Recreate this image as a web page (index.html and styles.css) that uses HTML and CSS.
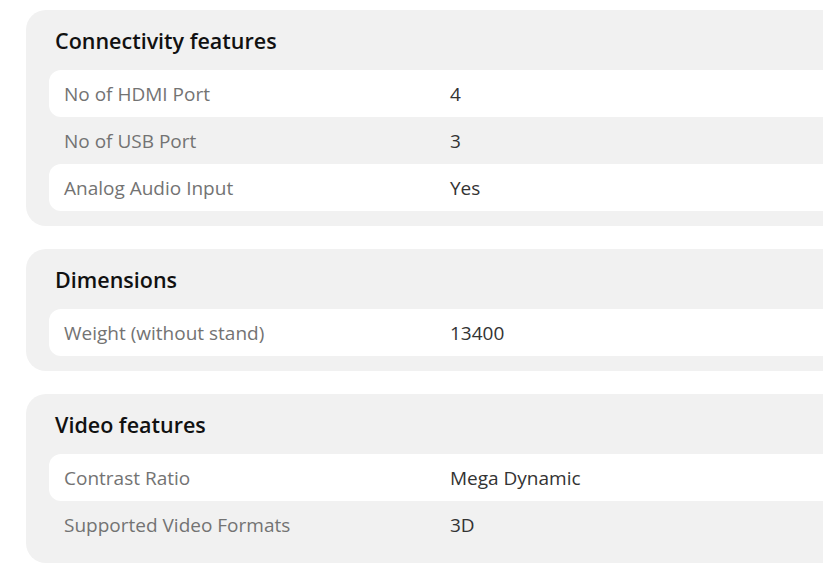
FILE: index.html
```html
<!DOCTYPE html>
<html lang="en">
<head>
<meta charset="utf-8">
<title>Specifications</title>
<link rel="stylesheet" href="styles.css">
</head>
<body>
<div class="specs">
  <section class="card">
    <h2 class="card-title">Connectivity features</h2>
    <div class="row"><span class="label">No of HDMI Port</span><span class="value">4</span></div>
    <div class="row"><span class="label">No of USB Port</span><span class="value">3</span></div>
    <div class="row"><span class="label">Analog Audio Input</span><span class="value">Yes</span></div>
  </section>
  <section class="card">
    <h2 class="card-title">Dimensions</h2>
    <div class="row"><span class="label">Weight (without stand)</span><span class="value">13400</span></div>
  </section>
  <section class="card">
    <h2 class="card-title">Video features</h2>
    <div class="row"><span class="label">Contrast Ratio</span><span class="value">Mega Dynamic</span></div>
    <div class="row"><span class="label">Supported Video Formats</span><span class="value">3D</span></div>
  </section>
</div>
</body>
</html>
```
FILE: styles.css
```css
html, body {
  margin: 0;
  overflow: hidden;
  background: #ffffff;
}
body {
  padding: 10px 0 0 26px;
  font-family: "Open Sans", "Noto Sans", sans-serif;
}
.specs {
  width: 900px;
  display: flex;
  flex-direction: column;
  gap: 23px;
}
.card {
  background: #f1f1f1;
  border-radius: 20px;
  padding: 0 0 15px 23px;
}
.card-title {
  margin: 0;
  height: 60px;
  display: flex;
  align-items: center;
  padding-left: 6px;
  font-size: 21.5px;
  font-weight: 600;
  color: #111111;
}
.row {
  display: grid;
  grid-template-columns: 386px 1fr;
  align-items: center;
  height: 47px;
  padding-left: 15px;
  border-radius: 12px;
  font-size: 19px;
  font-weight: 400;
}
.row:nth-of-type(odd) {
  background: #ffffff;
}
.label {
  color: #737373;
}
.value {
  color: #333333;
}
```
